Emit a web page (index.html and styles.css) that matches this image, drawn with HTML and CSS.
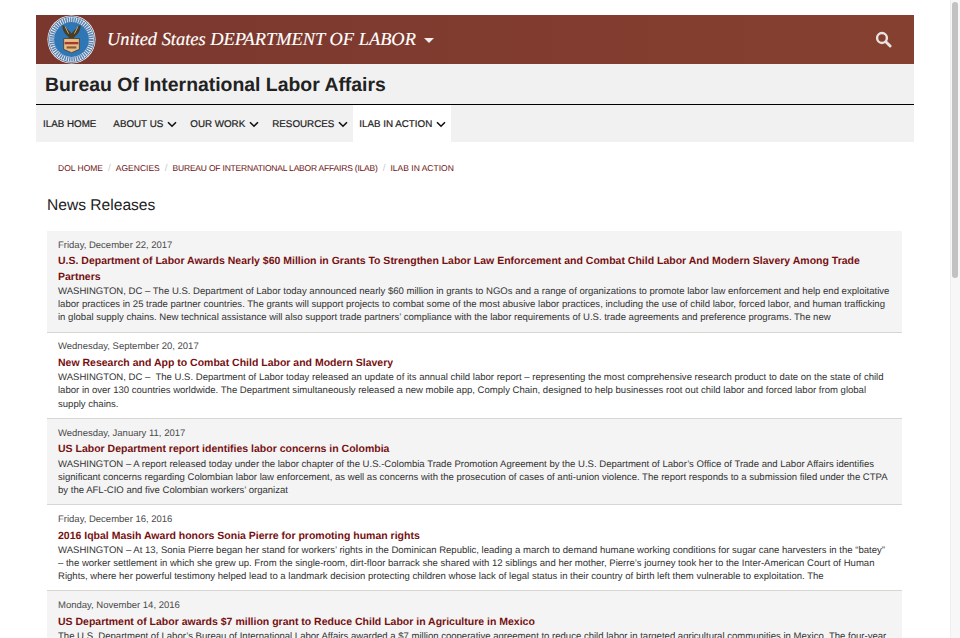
FILE: index.html
```html
<!DOCTYPE html>
<html lang="en">
<head>
<meta charset="utf-8">
<title>News Releases</title>
<link rel="stylesheet" href="styles.css">
</head>
<body>
<div class="page">
  <header class="banner">
    <svg class="seal" viewBox="0 0 50 50" aria-hidden="true">
      <circle cx="25" cy="25" r="24.5" fill="#fff"/>
      <circle cx="25" cy="25" r="23.4" fill="none" stroke="#2a4a78" stroke-width=".8"/>
      <circle cx="25" cy="25" r="20" fill="#fff" stroke="#5f86b3" stroke-width="5" stroke-dasharray="1.6 .7"/>
      <circle cx="25" cy="25" r="17.8" fill="#2f76b5"/>
      <path d="M25 19 C23 16 20 14 16 10 C15 15 18 19 21 21.5 L23 24 H27 L29 21.5 C32 19 35 15 34 10 C30 14 27 16 25 19Z" fill="#4a3d28"/>
      <path d="M18.5 12 L22 19 M31.5 12 L28 19" stroke="#c2ab72" stroke-width="1"/>
      <path d="M17 24 H33 V35 L25 38.5 L17 35Z" fill="#e6bd86" stroke="#3a2a18" stroke-width=".7"/>
      <rect x="18" y="27.5" width="14" height="2.4" fill="#a5392c"/>
      <rect x="20" y="32" width="10" height="2.2" fill="#8c5a33"/>
    </svg>
    <a class="agency" href="#">United States DEPARTMENT OF LABOR<span class="caret"></span></a>
    <svg class="search" viewBox="0 0 18 18" aria-hidden="true">
      <circle cx="7.4" cy="7.4" r="5.2" fill="none" stroke="#e6e3e0" stroke-width="2.6"/>
      <path d="M11.4 11.4 L16 16" stroke="#e6e3e0" stroke-width="3" stroke-linecap="round"/>
    </svg>
  </header>
  <div class="bureau"><h1>Bureau Of International Labor Affairs</h1></div>
  <nav class="menu">
    <a href="#" class="home">ILAB HOME</a>
    <a href="#">ABOUT US<svg class="chev" viewBox="0 0 10 7"><path d="M1 1.2 L5 5.2 L9 1.2" fill="none" stroke="#111" stroke-width="1.6"/></svg></a>
    <a href="#">OUR WORK<svg class="chev" viewBox="0 0 10 7"><path d="M1 1.2 L5 5.2 L9 1.2" fill="none" stroke="#111" stroke-width="1.6"/></svg></a>
    <a href="#">RESOURCES<svg class="chev" viewBox="0 0 10 7"><path d="M1 1.2 L5 5.2 L9 1.2" fill="none" stroke="#111" stroke-width="1.6"/></svg></a>
    <a href="#" class="active">ILAB IN ACTION<svg class="chev" viewBox="0 0 10 7"><path d="M1 1.2 L5 5.2 L9 1.2" fill="none" stroke="#111" stroke-width="1.6"/></svg></a>
  </nav>
  <ol class="crumbs">
    <li><a href="#">DOL HOME</a></li>
    <li><a href="#">AGENCIES</a></li>
    <li><a href="#" class="tight">BUREAU OF INTERNATIONAL LABOR AFFAIRS (ILAB)</a></li>
    <li><a href="#">ILAB IN ACTION</a></li>
  </ol>
  <main class="content">
    <h2>News Releases</h2>
    <article class="item shade">
      <time>Friday, December 22, 2017</time>
      <h3><a href="#">U.S. Department of Labor Awards Nearly $60 Million in Grants To Strengthen Labor Law Enforcement and Combat Child Labor And Modern Slavery Among Trade Partners</a></h3>
      <p>WASHINGTON, DC – The U.S. Department of Labor today announced nearly $60 million in grants to NGOs and a range of organizations to promote labor law enforcement and help end exploitative labor practices in 25 trade partner countries. The grants will support projects to combat some of the most abusive labor practices, including the use of child labor, forced labor, and human trafficking in global supply chains. New technical assistance will also support trade partners’ compliance with the labor requirements of U.S. trade agreements and preference programs. The new</p>
    </article>
    <article class="item">
      <time>Wednesday, September 20, 2017</time>
      <h3><a href="#">New Research and App to Combat Child Labor and Modern Slavery</a></h3>
      <p>WASHINGTON, DC –&nbsp; The U.S. Department of Labor today released an update of its annual child labor report – representing the most comprehensive research product to date on the state of child labor in over 130 countries worldwide. The Department simultaneously released a new mobile app, Comply Chain, designed to help businesses root out child labor and forced labor from global supply chains.</p>
    </article>
    <article class="item shade">
      <time>Wednesday, January 11, 2017</time>
      <h3><a href="#">US Labor Department report identifies labor concerns in Colombia</a></h3>
      <p>WASHINGTON – A report released today under the labor chapter of the U.S.-Colombia Trade Promotion Agreement by the U.S. Department of Labor’s Office of Trade and Labor Affairs identifies significant concerns regarding Colombian labor law enforcement, as well as concerns with the prosecution of cases of anti-union violence. The report responds to a submission filed under the CTPA by the AFL-CIO and five Colombian workers’ organizat</p>
    </article>
    <article class="item">
      <time>Friday, December 16, 2016</time>
      <h3><a href="#">2016 Iqbal Masih Award honors Sonia Pierre for promoting human rights</a></h3>
      <p>WASHINGTON – At 13, Sonia Pierre began her stand for workers’ rights in the Dominican Republic, leading a march to demand humane working conditions for sugar cane harvesters in the “batey” – the worker settlement in which she grew up. From the single-room, dirt-floor barrack she shared with 12 siblings and her mother, Pierre’s journey took her to the Inter-American Court of Human Rights, where her powerful testimony helped lead to a landmark decision protecting children whose lack of legal status in their country of birth left them vulnerable to exploitation. The</p>
    </article>
    <article class="item shade">
      <time>Monday, November 14, 2016</time>
      <h3><a href="#">US Department of Labor awards $7 million grant to Reduce Child Labor in Agriculture in Mexico</a></h3>
      <p>The U.S. Department of Labor’s Bureau of International Labor Affairs awarded a $7 million cooperative agreement to reduce child labor in targeted agricultural communities in Mexico. The four-year</p>
    </article>
  </main>
</div>
<div class="scrollbar"><div class="thumb"></div></div>
</body>
</html>
```
FILE: styles.css
```css
html, body { margin: 0; height: 638px; overflow: hidden; background: #fff; }
body { font-family: "Liberation Sans", Arial, sans-serif; color: #333; text-rendering: geometricPrecision; }
a { color: inherit; text-decoration: none; }
.page { width: 878px; margin-left: 36px; padding-top: 15px; }
.banner { height: 49px; display: flex; align-items: center; padding: 0 22px 0 11px; background: linear-gradient(90deg, #7a372e, #864030); }
.seal { width: 49px; height: 49px; flex: none; }
.agency { margin-left: 11px; font: italic 18.4px "Liberation Serif", serif; color: #fff; display: flex; align-items: center; -webkit-text-stroke: .15px #fff; }
.caret { margin: 2px 0 0 8px; border: 5px solid transparent; border-top-color: #eee; border-bottom: 0; }
.search { width: 17px; height: 17px; margin-left: auto; }
.bureau { height: 40px; background: #f1f1f1; border-bottom: 1px solid #000; display: flex; align-items: center; padding-left: 9px; }
h1 { margin: 0; font-size: 19.4px; font-weight: 700; color: #222; padding-top: 3px; }
.menu { display: flex; height: 37px; background: #f1f1f1; font-size: 9.8px; color: #222; }
.menu a { display: flex; align-items: center; padding: 2px 6px 0 7px; -webkit-text-stroke: .2px #222; }
.menu a.home { padding-right: 10px; }
.menu a.active { background: #fff; margin-left: -1px; padding-left: 6px; padding-right: 5px; }
.chev { width: 10px; height: 7px; margin: -1px 0 0 4px; }
.crumbs { list-style: none; display: flex; margin: 0; padding: 20px 0 0 22px; font-size: 8.5px; line-height: 12px; color: #6b0f0f; }
.crumbs li + li::before { content: "/"; color: #ccc; padding: 0 5px; font-size: 10px; }
.tight { letter-spacing: -.2px; }
.content { padding: 0 12px 0 11px; }
h2 { margin: 21px 0 15px; font-size: 15.6px; font-weight: 400; line-height: 20px; color: #222; }
.item { padding: 6.9px 11px 7px; border-bottom: 1px solid #d8d6d1; }
.shade { background: #f4f4f4; }
time { display: block; font-size: 9.5px; line-height: 16.5px; color: #4a4a4a; }
h3 { margin: 0; font-size: 10.5px; line-height: 15.3px; color: #761010; }
p { margin: 0; font-size: 9.55px; line-height: 13.2px; color: #333; }
.scrollbar { position: absolute; top: 0; right: 0; width: 10px; height: 638px; background: #f7f7f7; border-left: 1px solid #eee; box-sizing: border-box; }
.thumb { width: 6px; height: 276px; margin: 2px 0 0 1px; background: #c2c2c2; border-radius: 3px; }
```
